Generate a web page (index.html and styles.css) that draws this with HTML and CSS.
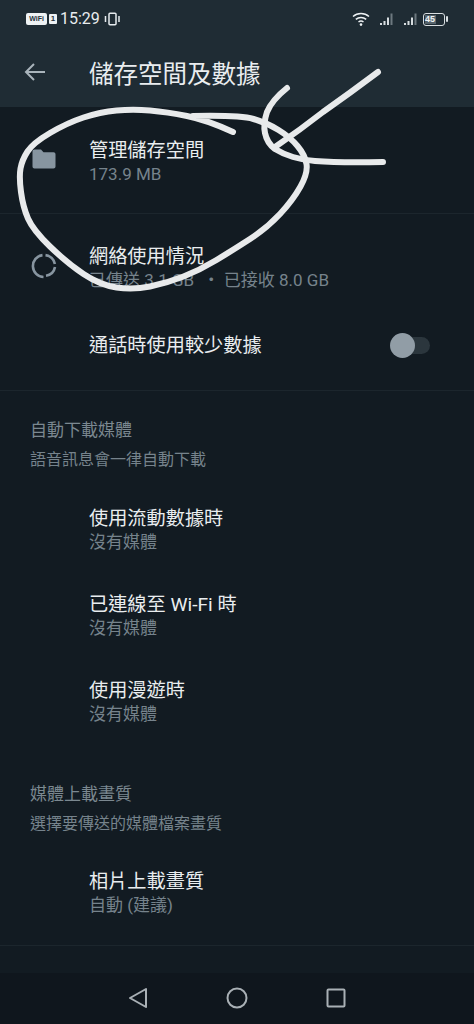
FILE: index.html
```html
<!DOCTYPE html>
<html lang="zh-Hant">
<head>
<meta charset="utf-8">
<title>儲存空間及數據</title>
<link rel="stylesheet" href="styles.css">
</head>
<body>
<div class="screen">
  <header class="top">
    <div class="status">
      <div class="status-left">
        <span class="vowifi">WiFi</span><span class="sim">1</span>
        <span class="time">15:29</span>
        <svg class="vibrate" width="16" height="14" viewBox="0 0 16 14"><rect x="5" y="1.2" width="7" height="11.6" rx="1" fill="none" stroke="#e6ebee" stroke-width="1.5"/><path d="M1.5 4v6M15 4v6" stroke="#e6ebee" stroke-width="1.5"/></svg>
      </div>
      <div class="status-right">
        <svg class="wifi" width="18" height="14" viewBox="0 0 18 14"><path d="M1 4.5C5.500.6 12.500.6 17 4.500M3.800 7.300c3-2.500 7.400-2.500 10.400 0M6.500 10c1.500-1.100 3.500-1.100 5 0" fill="none" stroke="#eef2f4" stroke-width="1.500"/><circle cx="9" cy="12.600" r="1.300" fill="#eef2f4"/></svg>
        <svg class="signal" width="15" height="14" viewBox="0 0 15 14"><path d="M1 11h2v2H1zM4.500 9h2v4h-2zM8 5.500h2V13H8z" fill="#d7dde0"/><path d="M11.500 1.500h2V13h-2z" fill="#6d787f"/></svg>
        <svg class="signal" width="15" height="14" viewBox="0 0 15 14"><path d="M1 11h2v2H1zM4.500 9h2v4h-2zM8 5.500h2V13H8z" fill="#d7dde0"/><path d="M11.500 1.500h2V13h-2z" fill="#6d787f"/></svg>
        <span class="battery"><span class="battery-level">45</span></span><span class="battery-cap"></span>
      </div>
    </div>
    <div class="bar">
      <svg class="back" width="22" height="18" viewBox="0 0 22 18"><path d="M21 9H2M10 1 2 9l8 8" fill="none" stroke="#a9b4bb" stroke-width="2"/></svg>
      <h1 class="title">儲存空間及數據</h1>
    </div>
  </header>

  <main class="list">
    <section class="group group-first">
      <div class="row row-manage">
        <svg class="row-icon" width="24" height="20" viewBox="0 0 24 20"><path d="M0.500 2.500C.5 1.300 1.300.5 2.500.5h6.500l2.500 2.700h10c1.200 0 2 .8 2 2V17.500c0 1.200-.8 2-2 2h-19c-1.200 0-2-.8-2-2z" fill="#8795a0"/></svg>
        <div class="main">
          <div class="name">管理儲存空間</div>
          <div class="sub">173.9 MB</div>
        </div>
      </div>
    </section>
    <section class="group group-network">
      <div class="row row-network">
        <svg class="row-icon" width="26" height="26" viewBox="0 0 26 26"><g fill="none" stroke="#8795a0" stroke-width="2.600"><path d="M14.500 2.100a11 11 0 0 1 9.400 9"/><path d="M24 14a11 11 0 0 1-9 8.800"/><path d="M12.500 24A11 11 0 0 1 11.500 2.100"/></g></svg>
        <div class="main">
          <div class="name">網絡使用情況</div>
          <div class="sub">已傳送 3.1 GB &nbsp;・ 已接收 8.0 GB</div>
        </div>
      </div>
      <div class="row row-toggle">
        <div class="main"><div class="name">通話時使用較少數據</div></div>
        <div class="toggle"><span class="knob"></span></div>
      </div>
    </section>
    <section class="group group-auto">
      <div class="head">
        <div class="head-title">自動下載媒體</div>
        <div class="head-sub">語音訊息會一律自動下載</div>
      </div>
      <div class="row row-item"><div class="main"><div class="name">使用流動數據時</div><div class="sub">沒有媒體</div></div></div>
      <div class="row row-item"><div class="main"><div class="name">已連線至 Wi-Fi 時</div><div class="sub">沒有媒體</div></div></div>
      <div class="row row-item"><div class="main"><div class="name">使用漫遊時</div><div class="sub">沒有媒體</div></div></div>
    </section>
    <section class="group group-upload">
      <div class="head">
        <div class="head-title">媒體上載畫質</div>
        <div class="head-sub">選擇要傳送的媒體檔案畫質</div>
      </div>
      <div class="row row-item"><div class="main"><div class="name">相片上載畫質</div><div class="sub">自動 (建議)</div></div></div>
    </section>
  </main>

  <nav class="nav">
    <svg width="20" height="22" viewBox="0 0 20 22"><path d="M18 2 2 11l16 9z" fill="none" stroke="#a9b0b5" stroke-width="2" stroke-linejoin="round"/></svg>
    <svg width="22" height="22" viewBox="0 0 22 22"><circle cx="11" cy="11" r="9.500" fill="none" stroke="#a9b0b5" stroke-width="2"/></svg>
    <svg width="20" height="20" viewBox="0 0 20 20"><rect x="1.500" y="1.500" width="17" height="17" rx="1" fill="none" stroke="#a9b0b5" stroke-width="2"/></svg>
  </nav>

  <svg class="scribble" width="474" height="300" viewBox="0 0 474 300">
    <g fill="none" stroke="#e8eaeb" stroke-width="6" stroke-linecap="round" stroke-linejoin="round">
      <path d="M233 132Q207 120 187 116Q167 112 150 110.500Q133 109 116.500 110.500Q100 112 83.500 117.500Q67 123 50 133Q33 143 27.500 151.500Q22 160 20.500 168.500Q19 177 21 192Q23 207 28 218.500Q33 230 50 246.500Q67 263 83.500 274Q100 285 116.500 287.500Q133 290 150 286.500Q167 283 183.500 276.500Q200 270 216.500 260Q233 250 250 239Q267 228 280 214Q293 200 300.500 186.500Q308 173 306.500 164Q305 155 297.500 146Q290 137 278.500 130Q267 123 253.500 119Q240 115 193 116"/>
      <path d="M287 88Q272 100 267 112Q263 124 265 133Q267 143 275 149Q283 154 293 157Q303 160 315 161Q340 163 383 162"/>
      <path d="M378 72Q350 93 323 112Q300 130 275 147"/>
    </g>
  </svg>
</div>
</body>
</html>
```

FILE: styles.css
```css
* { box-sizing: border-box; }
html, body { margin: 0; padding: 0; }
body { background: #121b22; font-family: Roboto, "Noto Sans CJK TC", sans-serif; }
.screen { position: relative; width: 474px; height: 1024px; overflow: hidden; display: flex; flex-direction: column; background: #121b22; }

.top { height: 107px; background: #1f2c34; flex: none; }
.status { height: 38px; padding: 0 26px 0 26px; display: flex; justify-content: space-between; align-items: center; }
.status-left, .status-right { display: flex; align-items: center; }
.vowifi { width: 21px; height: 12px; background: #eef2f4; color: #26323a; border-radius: 2px; font: 700 7px/12px "Liberation Sans", sans-serif; text-align: center; }
.sim { width: 8px; height: 10px; margin-left: 2px; background: #eef2f4; color: #26323a; border-radius: 1px; font: 700 8px/10px "Liberation Sans", sans-serif; text-align: center; }
.time { margin-left: 3px; color: #e9edef; font-size: 16px; line-height: 20px; }
.vibrate { margin-left: 4px; }
.signal { margin-left: 9px; }
.battery { margin-left: 5px; width: 22px; height: 13px; border: 1.500px solid #d7dde0; border-radius: 3px; padding: 1px; display: flex; }
.battery-level { width: 11px; background: #56636b; color: #eef2f4; font: 700 9px/8px "Liberation Sans", sans-serif; white-space: nowrap; }
.battery-cap { width: 2px; height: 6px; margin-left: 1px; background: #d7dde0; border-radius: 1px; }

.bar { height: 69px; display: flex; align-items: center; padding: 0 0 1px 24px; }
.back { flex: none; }
.title { margin: 5px 0 0 43px; color: #e9edef; font-weight: 400; font-size: 24.500px; line-height: 32px; }

.list { flex: 1; display: flex; flex-direction: column; min-height: 0; }
.group { border-bottom: 1px solid #1c262d; flex: none; }
.group-first { height: 107px; padding-top: 29px; }
.group-network { height: 177px; padding-top: 28px; }
.group-auto { height: 391px; padding-top: 27px; border-bottom: 0; }
.group-upload { height: 164px; }
.group-upload .head { height: 85px; }

.row { display: flex; align-items: flex-start; position: relative; }
.row-icon { position: absolute; }
.row-manage .row-icon { left: 32px; top: 13px; }
.row-network .row-icon { left: 31px; top: 11px; }
.main { padding-left: 89px; flex: 1; }
.name { color: #e9edef; font-size: 19.200px; line-height: 23px; padding-top: 3px; height: 26px; }
.row-toggle .name { padding-top: 2px; }
.sub { color: #76838c; font-size: 17px; line-height: 24px; white-space: nowrap; }
.row-toggle { margin-top: 39px; align-items: center; height: 28px; padding-right: 44px; }
.row-item { height: 86px; }

.toggle { position: relative; width: 35px; height: 17px; border-radius: 9px; background: #2b363d; }
.knob { position: absolute; left: -5px; top: -4px; width: 25px; height: 25px; border-radius: 50%; background: #919da6; }

.head { padding-left: 30px; height: 86px; }
.head-title { color: #7b8890; font-size: 17px; line-height: 24px; }
.head-sub { color: #76838c; font-size: 16px; line-height: 24px; margin-top: 6px; }

.nav { flex: none; height: 51px; margin-top: auto; background: #0f161d; display: flex; align-items: center; justify-content: center; gap: 78px; padding-bottom: 1px; }

.scribble { position: absolute; left: 0; top: 0; pointer-events: none; }
```
